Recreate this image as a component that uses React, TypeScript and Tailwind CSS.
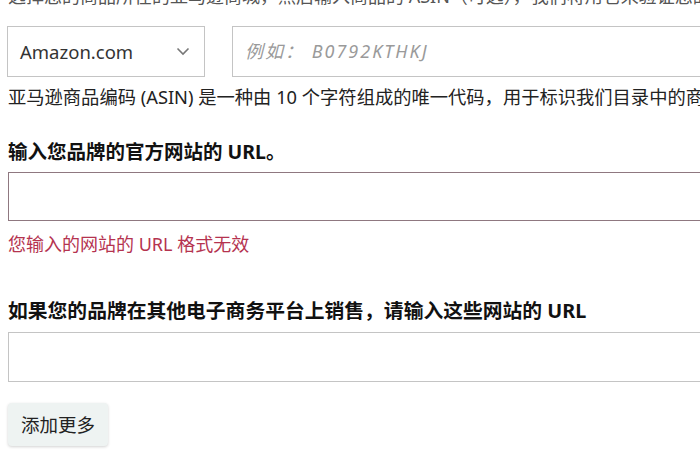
export default function App() {
    const font = { fontFamily: '"Noto Sans", "Noto Sans CJK SC", sans-serif' }
    return (
        <div className="w-[700px] h-[470px] overflow-hidden bg-white" style={font}>
            <div className="w-[820px] pl-[8px]">
                <div className="-mt-[16px] h-[24px] leading-[24px] text-[18px] text-[#555] whitespace-nowrap">
                    选择您的商品所在的亚马逊商城，然后输入商品的 ASIN（可选），我们将用它来验证您的品牌所有权。
                </div>
                <div className="mt-[18px] flex items-stretch gap-[27px] h-[51px]">
                    <div className="-ml-[1px] w-[198px] border border-[#c4c4c4] flex items-center justify-between pl-[12px] pr-[14px]">
                        <span className="text-[18.5px] text-[#333]">Amazon.com</span>
                        <svg width="14" height="9" viewBox="0 0 14 9" fill="none">
                            <path d="M1.5 1.5 L7 7 L12.5 1.5" stroke="#777" strokeWidth="1.6" />
                        </svg>
                    </div>
                    <div className="flex-1 border border-[#c4c4c4] flex items-center pl-[12px]">
                        <span className="italic text-[18px] text-[#9a9a9a] tracking-[2px]">例如：&nbsp;B0792KTHKJ</span>
                    </div>
                </div>
                <div className="mt-[9px] h-[22px] leading-[22px] text-[18.3px] text-[#222] whitespace-nowrap">
                    亚马逊商品编码 (ASIN) 是一种由 10 个字符组成的唯一代码，用于标识我们目录中的商品。
                </div>
                <div className="mt-[32px] h-[24px] leading-[24px] text-[19.5px] font-bold text-[#111] whitespace-nowrap">
                    输入您品牌的官方网站的 URL。
                </div>
                <div className="mt-[8px] h-[49px] border border-[#8f7880] bg-white"></div>
                <div className="mt-[12px] h-[22px] leading-[22px] text-[18px] text-[#b5334f]">
                    您输入的网站的 URL 格式无效
                </div>
                <div className="mt-[44px] h-[24px] leading-[24px] text-[19.8px] font-bold text-[#111] whitespace-nowrap">
                    如果您的品牌在其他电子商务平台上销售，请输入这些网站的 URL
                </div>
                <div className="mt-[9px] h-[50px] border border-[#c4c4c4] bg-white"></div>
                <button className="mt-[21px] h-[43px] w-[100px] rounded-[4px] bg-[#eef3f2] shadow-[0_1px_3px_rgba(0,0,0,0.18)] text-[18.5px] text-[#222]">
                    添加更多
                </button>
            </div>
        </div>
    )
}
